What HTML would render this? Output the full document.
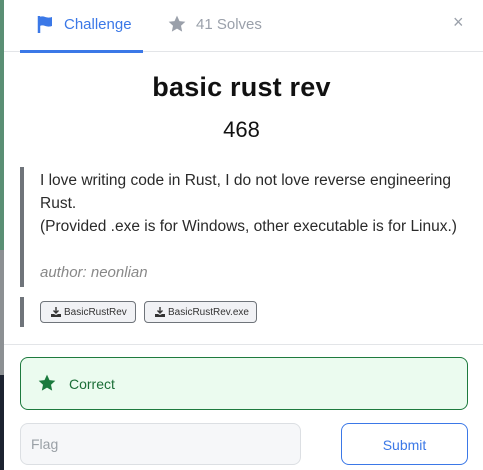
<!DOCTYPE html>
<html><head><style>
*{margin:0;padding:0;box-sizing:border-box}
body{width:483px;height:470px;overflow:hidden;background:#fff;font-family:"Liberation Sans",sans-serif;position:relative}
.a{position:absolute}
.dl{display:inline-block;vertical-align:-2px;margin-right:3px}
</style></head><body>
<div class="a" style="left:0;top:0;width:4px;height:250px;background:#5a8f74"></div>
<div class="a" style="left:0;top:250px;width:4px;height:125px;background:#8c9093"></div>
<div class="a" style="left:0;top:375px;width:4px;height:95px;background:#1c2230"></div>
<div class="a" style="left:4px;top:0;width:479px;height:470px;background:#fff"></div>
<svg class="a" style="left:37px;top:15px" width="18" height="18" viewBox="0 0 18 18"><path d="M2 1v17" stroke="#3b78e7" stroke-width="2.5"/><path d="M3 2c4-2 6 2 12 0v9c-6 2-8-2-12 0z" fill="#3b78e7"/></svg>
<div class="a" style="left:64px;top:16px;font-size:15px;color:#3b78e7">Challenge</div>
<svg class="a" style="left:167px;top:14px" width="20" height="20" viewBox="0 0 24 24"><path d="M12 2l3 6.5 7 .8-5.2 4.8 1.4 7L12 17.6 5.8 21.1l1.4-7L2 9.3l7-.8z" fill="#9aa0aa"/></svg>
<div class="a" style="left:196px;top:16px;font-size:15px;color:#9aa0aa">41 Solves</div>
<div class="a" style="left:453px;top:12px;font-size:18px;color:#9aa0aa">×</div>
<div class="a" style="left:4px;top:51px;width:479px;height:1px;background:#e3e5e8"></div>
<div class="a" style="left:20px;top:50px;width:123px;height:3px;background:#3b78e7"></div>
<div class="a" style="left:0;top:72px;width:483px;text-align:center;font-size:27px;font-weight:bold;color:#111;letter-spacing:0.2px">basic rust rev</div>
<div class="a" style="left:0;top:117px;width:483px;text-align:center;font-size:22px;color:#111">468</div>
<div class="a" style="left:20px;top:167px;width:4px;height:120px;background:#6f747a"></div>
<div class="a" style="left:40px;top:169px;width:430px;font-size:15.5px;line-height:23px;color:#2a2a2a">I love writing code in Rust, I do not love reverse engineering<br>Rust.<br>(Provided .exe is for Windows, other executable is for Linux.)</div>
<div class="a" style="left:40px;top:264px;font-size:15px;font-style:italic;color:#888">author: neonlian</div>
<div class="a" style="left:20px;top:297px;width:4px;height:30px;background:#6f747a"></div>
<div class="a" style="left:40px;top:301px;width:96px;height:22px;border:1px solid #6f747a;border-radius:4px;background:#f1f2f5;font-size:10px;color:#333;padding:5px 0 0 10px;white-space:nowrap"><svg class="dl" width="10" height="10" viewBox="0 0 10 10"><path d="M5 0v6M2.5 3.5L5 6l2.5-2.5" stroke="#333" stroke-width="1.4" fill="none"/><path d="M0 7h3l2 1 2-1h3v3H0z" fill="#333"/></svg>BasicRustRev</div>
<div class="a" style="left:144px;top:301px;width:113px;height:22px;border:1px solid #6f747a;border-radius:4px;background:#f1f2f5;font-size:10px;color:#333;padding:5px 0 0 10px;white-space:nowrap"><svg class="dl" width="10" height="10" viewBox="0 0 10 10"><path d="M5 0v6M2.5 3.5L5 6l2.5-2.5" stroke="#333" stroke-width="1.4" fill="none"/><path d="M0 7h3l2 1 2-1h3v3H0z" fill="#333"/></svg>BasicRustRev.exe</div>
<div class="a" style="left:4px;top:344px;width:479px;height:1px;background:#e3e5e8"></div>
<div class="a" style="left:20px;top:357px;width:448px;height:53px;border:1px solid #1e7a3e;border-radius:8px;background:#ebfbef"></div>
<svg class="a" style="left:37px;top:373px" width="20" height="20" viewBox="0 0 24 24"><path d="M12 2l3 6.5 7 .8-5.2 4.8 1.4 7L12 17.6 5.8 21.1l1.4-7L2 9.3l7-.8z" fill="#1b7a3d"/></svg>
<div class="a" style="left:69px;top:376px;font-size:14px;color:#1b6e37">Correct</div>
<div class="a" style="left:20px;top:423px;width:281px;height:42px;border:1px solid #dcdfe3;border-radius:8px;background:#f6f7f9"></div>
<div class="a" style="left:31px;top:436px;font-size:14px;color:#9aa0a6">Flag</div>
<div class="a" style="left:341px;top:423px;width:127px;height:42px;border:1px solid #3b78e7;border-radius:8px;background:#fff;text-align:center;padding-top:13px;font-size:14px;color:#3b78e7">Submit</div>
</body></html>
